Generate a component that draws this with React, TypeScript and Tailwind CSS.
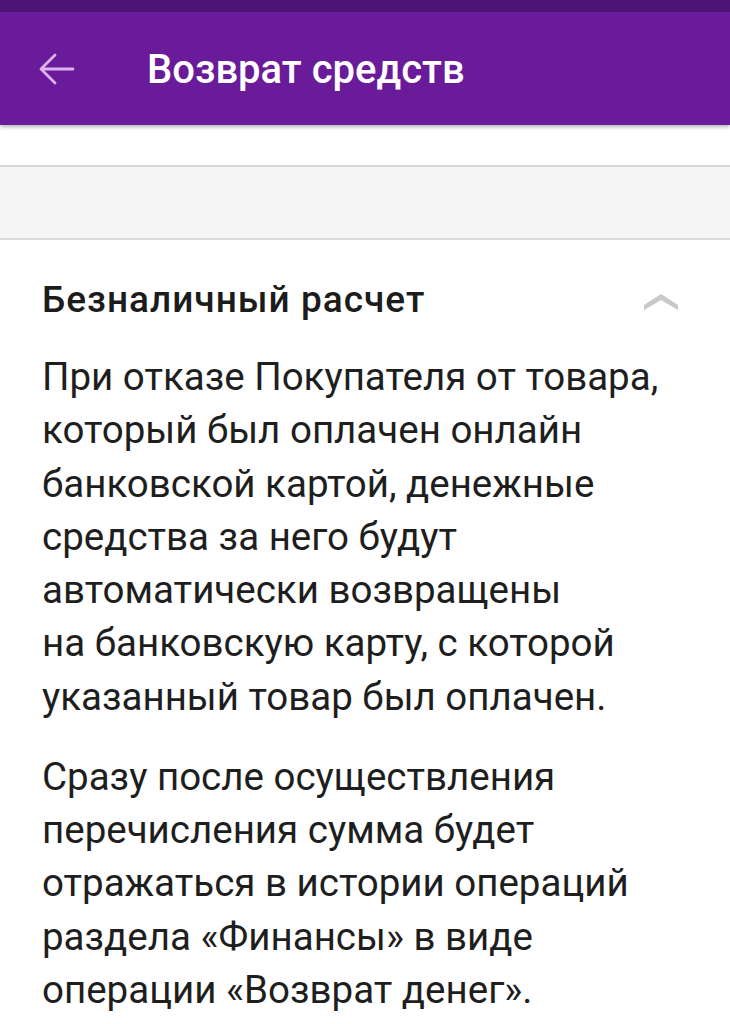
import React from "react";

export default function App() {
  return (
    <div className="w-[730px] h-[1024px] overflow-hidden bg-white" style={{ fontFamily: "Roboto, 'Noto Sans', sans-serif" }}>
      <div className="h-[12px] bg-[#4e1478]" />
      <div className="h-[113px] bg-[#6a1b9a] flex items-center shadow-[0_2px_4px_rgba(0,0,0,0.3)] relative z-10">
        <div className="w-[147px] flex items-center pl-[33px]">
          <svg width="48" height="48" viewBox="0 0 24 24" fill="none" stroke="#dcb2ec" strokeWidth="1.4" strokeLinecap="round" strokeLinejoin="round">
            <path d="M20 12H4M11 5l-7 7 7 7" />
          </svg>
        </div>
        <div className="text-white text-[40px] font-medium leading-none mt-[2px]">Возврат средств</div>
      </div>
      <div className="h-[40px] bg-white" />
      <div className="h-[75px] bg-[#f5f5f5] border-y-2 border-[#d8d8d8]" />
      <div className="pl-[42px] pr-[40px] pt-[40px]">
        <div className="flex items-center justify-between h-[40px]">
          <div className="text-[37px] font-medium text-[#1c1c1c] leading-[40px] tracking-[1px]">Безналичный расчет</div>
          <svg width="38" height="22" viewBox="0 0 38 22" className="mr-[10px] mt-[4px]">
            <path d="M2 14 L19 3 L36 14 L36 19 L19 9 L2 19 Z" fill="#c8c8c8" />
          </svg>
        </div>
        <div className="mt-[30px] text-[38.5px] leading-[53.25px] text-[#1e1e1e]">
          <p>При отказе Покупателя от товара,<br />который был оплачен онлайн<br />банковской картой, денежные<br />средства за него будут<br />автоматически возвращены<br />на банковскую карту, с которой<br />указанный товар был оплачен.</p>
          <p className="mt-[27px]">Сразу после осуществления<br />перечисления сумма будет<br />отражаться в истории операций<br />раздела «Финансы» в виде<br />операции «Возврат денег».</p>
        </div>
      </div>
    </div>
  );
}
